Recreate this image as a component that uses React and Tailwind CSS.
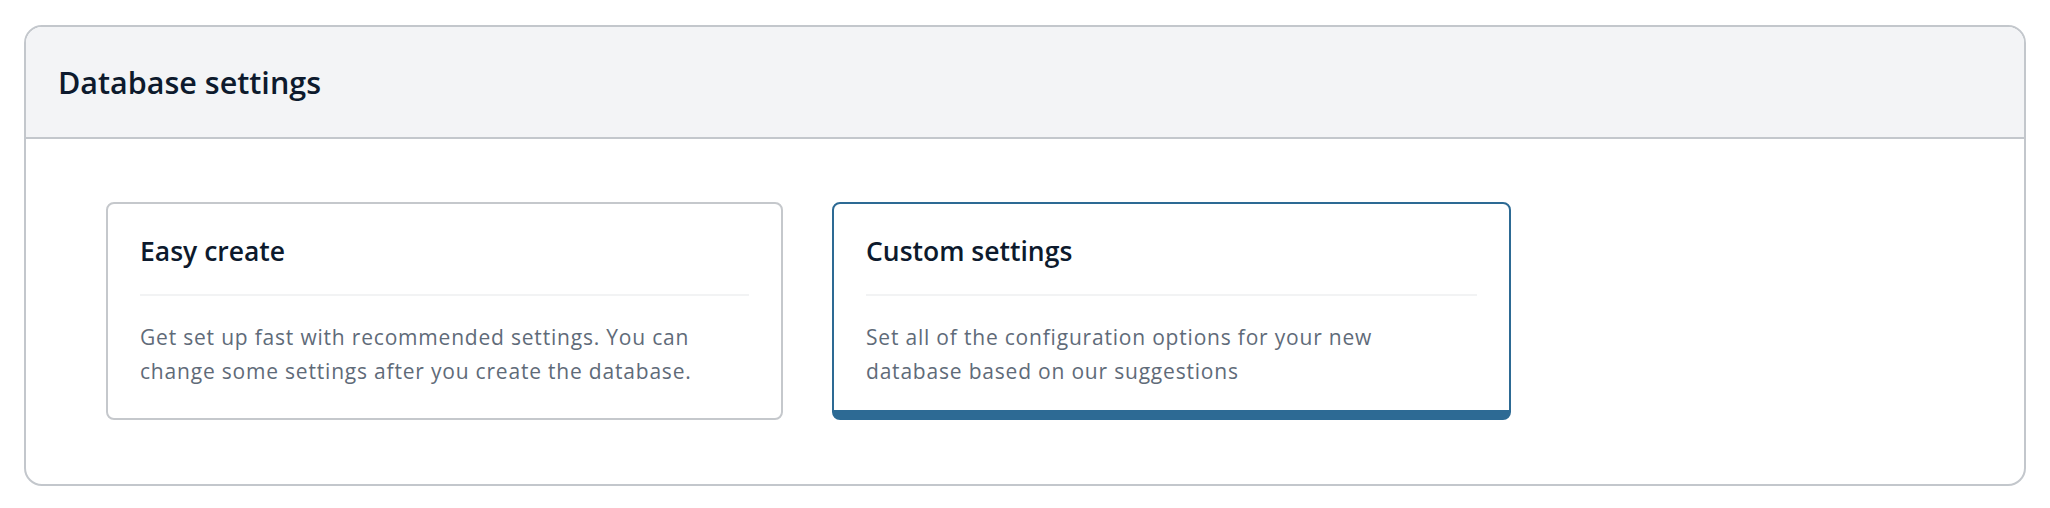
// Database settings panel: header strip + two option cards (second is selected).
import React from "react"

const options = [
  {
    id: "easy",
    title: "Easy create",
    body: "Get set up fast with recommended settings. You can change some settings after you create the database.",
  },
  {
    id: "custom",
    title: "Custom settings",
    body: "Set all of the configuration options for your new database based on our suggestions",
  },
]

function OptionCard({ title, body, selected }) {
  return (
    <div
      className={
        selected
          ? "w-[679px] h-[218px] rounded-[8px] border-2 border-b-[10px] border-[#2d6a94] bg-white px-[32px] pt-[31px]"
          : "w-[677px] h-[218px] rounded-[8px] border-2 border-[#c5c8cc] bg-white px-[32px] pt-[31px]"
      }
    >
      <h3 className="text-[26.5px] leading-[32px] font-semibold text-[#0d1a2d]">{title}</h3>
      <div className="mt-[27px] h-[2px] bg-[#f2f3f4]" />
      <p className="mt-[24px] pr-[40px] text-[21px] leading-[34px] tracking-[0.8px] text-[#5f6b79]">{body}</p>
    </div>
  )
}

export default function App() {
  const selected = "custom"
  return (
    <div
      className="w-[2050px] h-[508px] bg-white pt-[25px] pl-[24px]"
      style={{ fontFamily: "'Open Sans', 'Noto Sans', sans-serif" }}
    >
      <div className="w-[2002px] h-[461px] rounded-[18px] border-2 border-[#c3c7cc] overflow-hidden">
        <div className="h-[112px] bg-[#f3f4f6] border-b-2 border-[#c3c7cc] flex items-center px-[32px]">
          <h2 className="text-[30.5px] leading-[40px] font-semibold text-[#0d1a2d]">Database settings</h2>
        </div>
        <div className="flex gap-[49px] pl-[80px] pt-[63px]">
          {options.map((o) => (
            <OptionCard key={o.id} title={o.title} body={o.body} selected={o.id === selected} />
          ))}
        </div>
      </div>
    </div>
  )
}
